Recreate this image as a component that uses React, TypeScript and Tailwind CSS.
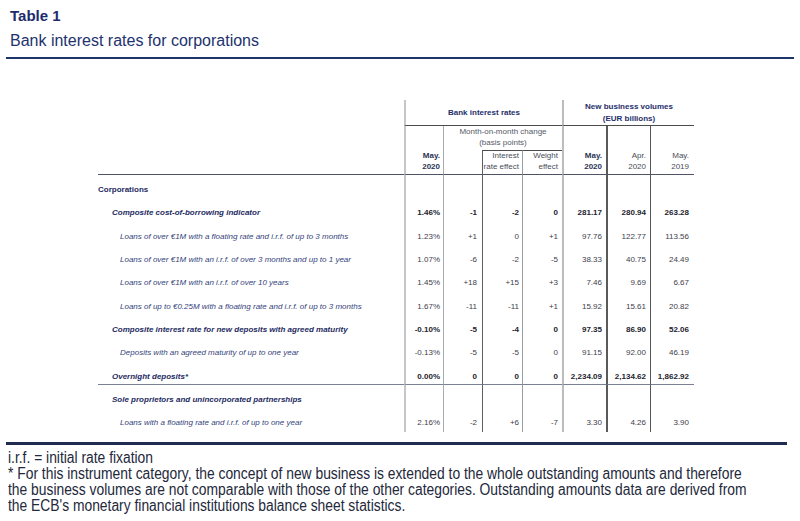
import React from 'react';

type Kind = 'sec' | 'sub' | 'item';

interface Row {
  label: string;
  kind: Kind;
  vals?: string[];
  rule?: boolean;
}

const rows: Row[] = [
  { label: 'Corporations', kind: 'sec' },
  { label: 'Composite cost-of-borrowing indicator', kind: 'sub', vals: ['1.46%', '-1', '-2', '0', '281.17', '280.94', '263.28'] },
  { label: 'Loans of over €1M with a floating rate and i.r.f. of up to 3 months', kind: 'item', vals: ['1.23%', '+1', '0', '+1', '97.76', '122.77', '113.56'] },
  { label: 'Loans of over €1M with an i.r.f. of over 3 months and up to 1 year', kind: 'item', vals: ['1.07%', '-6', '-2', '-5', '38.33', '40.75', '24.49'] },
  { label: 'Loans of over €1M with an i.r.f. of over 10 years', kind: 'item', vals: ['1.45%', '+18', '+15', '+3', '7.46', '9.69', '6.67'] },
  { label: 'Loans of up to €0.25M with a floating rate and i.r.f. of up to 3 months', kind: 'item', vals: ['1.67%', '-11', '-11', '+1', '15.92', '15.61', '20.82'] },
  { label: 'Composite interest rate for new deposits with agreed maturity', kind: 'sub', vals: ['-0.10%', '-5', '-4', '0', '97.35', '86.90', '52.06'] },
  { label: 'Deposits with an agreed maturity of up to one year', kind: 'item', vals: ['-0.13%', '-5', '-5', '0', '91.15', '92.00', '46.19'] },
  { label: 'Overnight deposits*', kind: 'sub', vals: ['0.00%', '0', '0', '0', '2,234.09', '2,134.62', '1,862.92'], rule: true },
  { label: 'Sole proprietors and unincorporated partnerships', kind: 'sub' },
  { label: 'Loans with a floating rate and i.r.f. of up to one year', kind: 'item', vals: ['2.16%', '-2', '+6', '-7', '3.30', '4.26', '3.90'] },
];

const notes = [
  'i.r.f. = initial rate fixation',
  '* For this instrument category, the concept of new business is extended to the whole outstanding amounts and therefore',
  'the business volumes are not comparable with those of the other categories. Outstanding amounts data are derived from',
  "the ECB's monetary financial institutions balance sheet statistics.",
];

const COLS = 'grid grid-cols-[306px_39px_39px_40px_40px_44px_44px_44px]';

// vertical rules, one per value column (x = 404, 443, 482, 522, 562, 606, 650)
const LINES = [
  'border-l-2 border-l-[#c6c6c6]',
  'border-l border-l-[#ababab]',
  'border-l border-l-[#5e5e5e]',
  'border-l border-l-[#9c9c9c]',
  'border-l-2 border-l-[#bcbcbc]',
  'border-l-2 border-l-[#5a5a5a]',
  'border-l border-l-[#555555]',
];

const PADS = ['pr-[3px]', 'pr-[5px]', 'pr-[3px]', 'pr-[4px]', 'pr-[4px]', 'pr-[4px]', 'pr-[5px]'];

const labelClass: Record<Kind, string> = {
  sec: 'pl-0 font-bold text-[#1e2b5f]',
  sub: 'pl-[14px] font-bold italic text-[#1e2b5f]',
  item: 'pl-[22px] italic text-[#34437c]',
};

export default function App() {
  return (
    <div className="w-[800px] h-[521px] bg-white overflow-hidden font-['Liberation_Sans',Arial,sans-serif]">
      {/* Title */}
      <div className="pl-[10px] pt-[7px]">
        <div className="text-[15px] leading-[18px] font-bold text-[#1d2b6b]">Table 1</div>
        <div className="mt-[6px] text-[16px] leading-[20px] text-[#21326e]">Bank interest rates for corporations</div>
      </div>
      <div className="mt-[6px] mx-[6px] h-[2px] bg-[#1f3569]" />

      {/* Table */}
      <div className="mt-[41px] ml-[98px] w-[596px] text-[8px] leading-[10px]">
        {/* header row A */}
        <div className={`${COLS} h-[26px]`}>
          <div />
          <div className="col-span-4 border-l-2 border-l-[#c6c6c6] border-b border-b-[#4c4c4c] flex items-center justify-center font-bold text-[#1f2f6a]">
            Bank interest rates
          </div>
          <div className="col-span-3 border-l-2 border-l-[#bcbcbc] border-b border-b-[#4c4c4c] flex flex-col items-center justify-center leading-[12px] font-bold text-[#1f2f6a]">
            <span>New business volumes</span>
            <span>(EUR billions)</span>
          </div>
        </div>

        {/* header row B */}
        <div className={`${COLS} h-[24px]`}>
          <div />
          <div className={LINES[0]} />
          <div className="col-span-3 border-l border-l-[#ababab] flex flex-col items-center justify-end pb-[2px] leading-[11px] text-[#555a66]">
            <span>Month-on-month change</span>
            <span>(basis points)</span>
          </div>
          <div className={LINES[4]} />
          <div className={LINES[5]} />
          <div className={LINES[6]} />
        </div>

        {/* header row C */}
        <div className={`${COLS} h-[25px] leading-[10.5px]`}>
          <div className="border-b border-b-[#4f5366]" />
          <div className={`${LINES[0]} border-b border-b-[#4f5366] pr-[3px] pt-[1px] text-right font-bold text-[#2b3352]`}>
            May.<br />2020
          </div>
          <div className={`${LINES[1]} border-b border-b-[#4f5366]`} />
          <div className={`${LINES[2]} border-t border-t-[#4c4c4c] border-b border-b-[#4f5366] pr-[3px] text-right text-[#4a4d58] whitespace-nowrap`}>
            Interest<br />rate effect
          </div>
          <div className={`${LINES[3]} border-t border-t-[#4c4c4c] border-b border-b-[#4f5366] pr-[4px] text-right text-[#4a4d58]`}>
            Weight<br />effect
          </div>
          <div className={`${LINES[4]} border-b border-b-[#4f5366] pr-[4px] pt-[1px] text-right font-bold text-[#2b3352]`}>
            May.<br />2020
          </div>
          <div className={`${LINES[5]} border-b border-b-[#4f5366] pr-[4px] pt-[1px] text-right text-[#4a4d58]`}>
            Apr.<br />2020
          </div>
          <div className={`${LINES[6]} border-b border-b-[#4f5366] pr-[5px] pt-[1px] text-right text-[#4a4d58]`}>
            May.<br />2019
          </div>
        </div>

        {/* body */}
        {rows.map((row, i) => {
          const bold = row.kind !== 'item';
          const rule = row.rule ? 'border-b border-b-[#7b7f94]' : '';
          return (
            <div key={i} className={`${COLS} h-[23.33px]`}>
              <div className={`pt-[10px] whitespace-nowrap ${labelClass[row.kind]} ${rule}`}>{row.label}</div>
              {LINES.map((line, j) => (
                <div
                  key={j}
                  className={`${line} ${PADS[j]} ${rule} pt-[10px] text-right whitespace-nowrap ${
                    bold ? 'font-bold text-[#23232e]' : 'text-[#40404c]'
                  }`}
                >
                  {row.vals ? row.vals[j] : ''}
                </div>
              ))}
            </div>
          );
        })}
      </div>

      {/* bottom rule + notes (narrow face, squeezed) */}
      <div className="mt-[10px] ml-[6px] mr-[13px] h-[3px] bg-[#1f2c4f]" />
      <div className="mt-[5px] pl-[8px] text-[16px] leading-[16px] text-[#23283a] whitespace-nowrap">
        {notes.map((n) => (
          <div key={n} className="w-[860px] origin-left scale-x-[0.865]">{n}</div>
        ))}
      </div>
    </div>
  );
}
